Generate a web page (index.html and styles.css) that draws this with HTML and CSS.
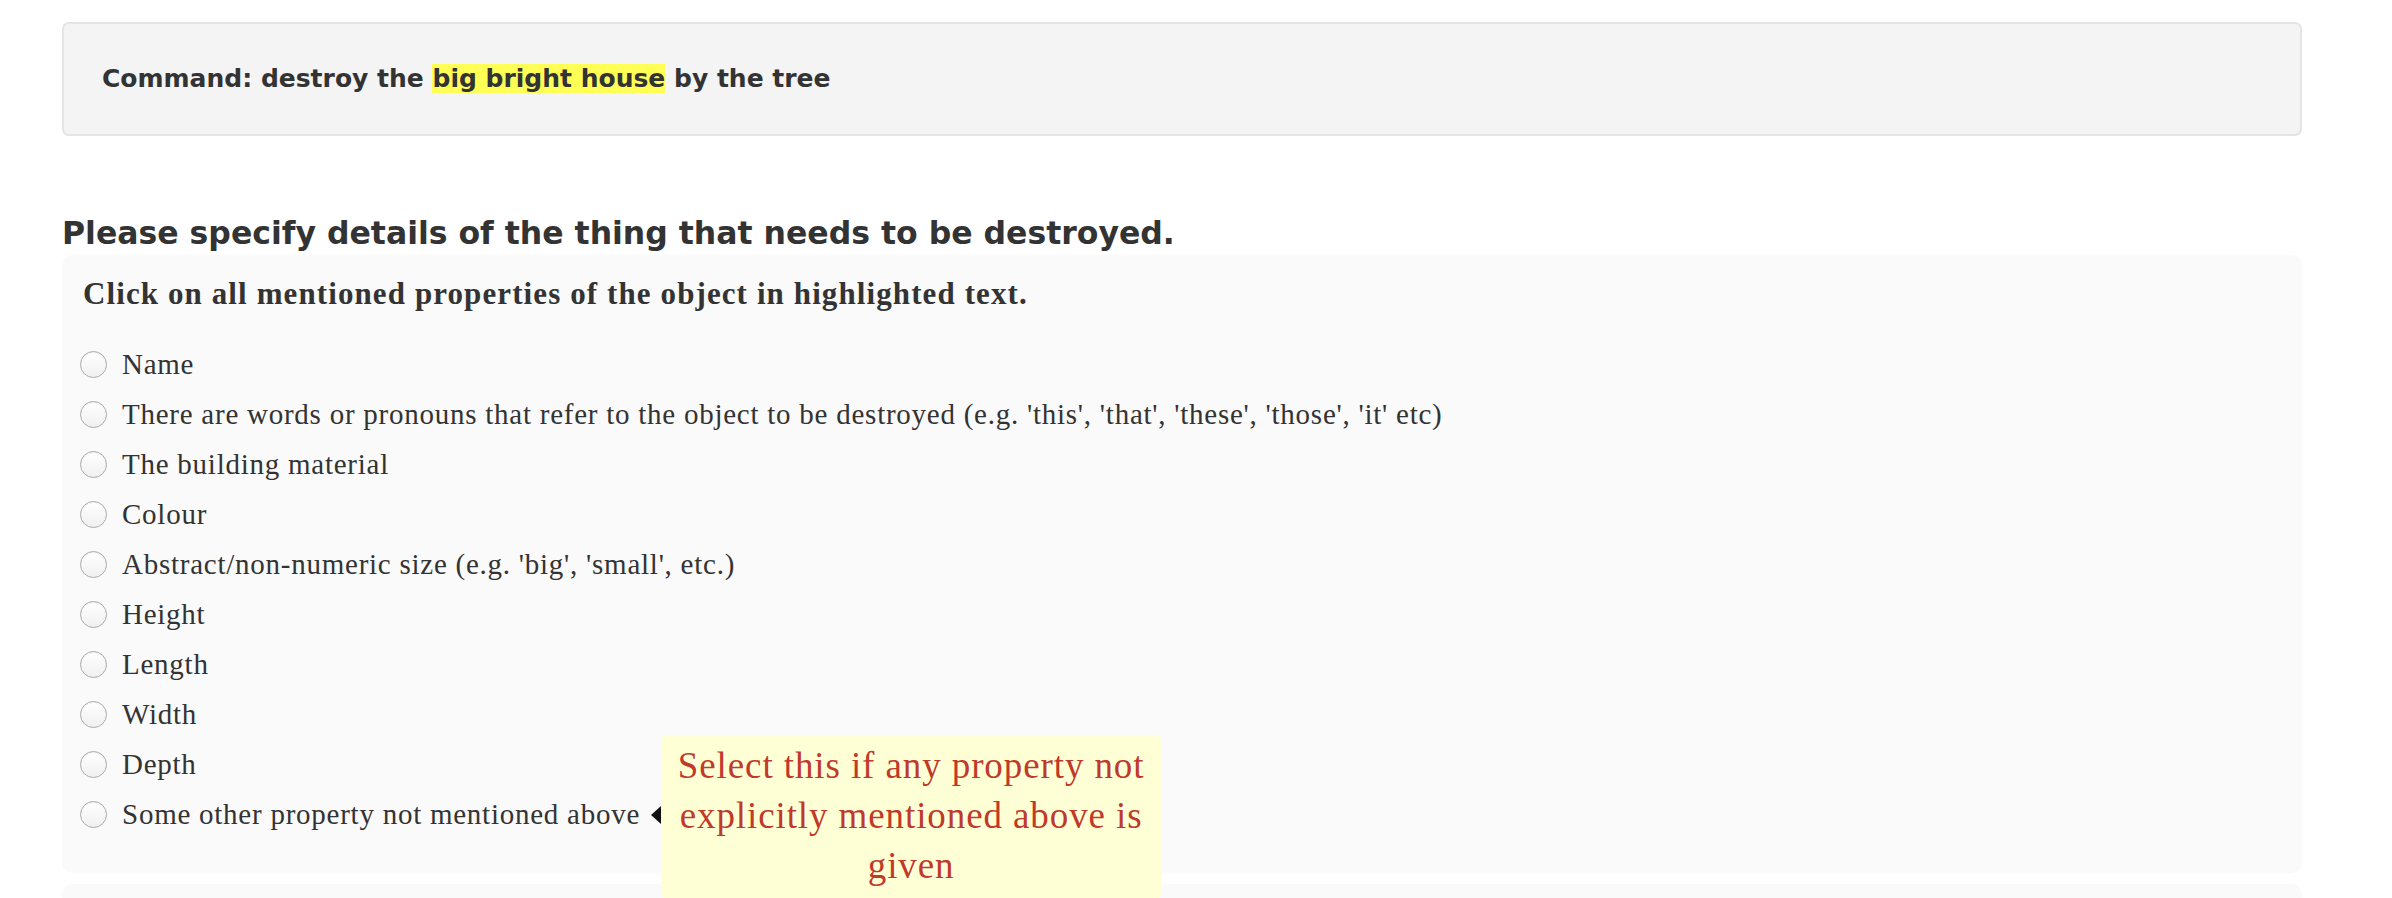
FILE: index.html
```html
<!DOCTYPE html>
<html lang="en">
<head>
<meta charset="utf-8">
<title>Destroy command</title>
<link rel="stylesheet" href="styles.css">
</head>
<body>
<div class="page">
  <div class="command">Command: destroy the <span class="hl">big bright house</span> by the tree</div>

  <h2 class="title">Please specify details of the thing that needs to be destroyed.</h2>

  <div class="panel">
    <div class="question">Click on all mentioned properties of the object in highlighted text.</div>
    <div class="options">
      <label class="opt"><input type="radio" class="radio"><span class="opt-text">Name</span></label>
      <label class="opt"><input type="radio" class="radio"><span class="opt-text">There are words or pronouns that refer to the object to be destroyed (e.g. 'this', 'that', 'these', 'those', 'it' etc)</span></label>
      <label class="opt"><input type="radio" class="radio"><span class="opt-text">The building material</span></label>
      <label class="opt"><input type="radio" class="radio"><span class="opt-text">Colour</span></label>
      <label class="opt"><input type="radio" class="radio"><span class="opt-text">Abstract/non-numeric size (e.g. 'big', 'small', etc.)</span></label>
      <label class="opt"><input type="radio" class="radio"><span class="opt-text">Height</span></label>
      <label class="opt"><input type="radio" class="radio"><span class="opt-text">Length</span></label>
      <label class="opt"><input type="radio" class="radio"><span class="opt-text">Width</span></label>
      <label class="opt"><input type="radio" class="radio"><span class="opt-text">Depth</span></label>
      <label class="opt"><input type="radio" class="radio"><span class="opt-text has-tip">Some other property not mentioned above<span class="tip">Select this if any property not explicitly mentioned above is given</span></span></label>
    </div>
  </div>

  <div class="panel panel-next"></div>
</div>
</body>
</html>
```

FILE: styles.css
```css
html, body {
  margin: 0;
  padding: 0;
  background: #ffffff;
  overflow: hidden;
}

body {
  color: #333333;
}

.page {
  width: 2240px;
  padding: 22px 0 0 62px;
}

.command {
  background: #f4f4f4;
  border: 2px solid #e4e4e4;
  border-radius: 7px;
  padding: 40px 38px;
  font-family: "DejaVu Sans", Verdana, sans-serif;
  font-weight: bold;
  font-size: 25px;
  line-height: 30px;
  color: #333333;
}

.hl {
  background: #ffff55;
}

.title {
  margin: 79px 0 4px 0;
  font-family: "DejaVu Sans", Verdana, sans-serif;
  font-weight: bold;
  font-size: 31.5px;
  line-height: 36px;
  color: #333333;
}

.panel {
  background: #fafafa;
  border-radius: 10px;
  padding: 18.5px 18px 34px 18px;
}

.panel-next {
  margin-top: 11px;
  height: 60px;
  padding: 0;
}

.question {
  margin-left: 3px;
  font-family: "Liberation Serif", Georgia, serif;
  font-weight: bold;
  font-size: 31px;
  line-height: 40px;
  letter-spacing: 1.1px;
  color: #333333;
}

.options {
  margin-top: 25.7px;
  display: flex;
  flex-direction: column;
}

.opt {
  display: flex;
  align-items: center;
  height: 50px;
  font-family: "Liberation Serif", Georgia, serif;
  font-size: 29px;
  line-height: 50px;
  letter-spacing: 0.75px;
  color: #333333;
}

.radio {
  appearance: none;
  -webkit-appearance: none;
  box-sizing: border-box;
  width: 27px;
  height: 27px;
  margin: 0 15px 0 0;
  border: 1px solid #aaaaaa;
  border-radius: 50%;
  background: linear-gradient(#ffffff, #f0f0f0);
  box-shadow: inset 0 1px 1px rgba(0, 0, 0, 0.06);
  flex: none;
}

.opt-text {
  white-space: nowrap;
}

.has-tip {
  position: relative;
}

.tip {
  position: absolute;
  left: calc(100% + 21px);
  top: -54px;
  width: 500px;
  box-sizing: border-box;
  padding: 5.5px 14px 8.5px;
  background: #ffffd5;
  border-radius: 6px;
  color: #c0392b;
  font-family: "Liberation Serif", Georgia, serif;
  font-size: 37px;
  line-height: 50px;
  letter-spacing: 0.9px;
  text-align: center;
  white-space: normal;
}

.tip::before {
  content: "";
  position: absolute;
  right: 100%;
  top: 71px;
  border-top: 9px solid transparent;
  border-bottom: 9px solid transparent;
  border-right: 10px solid #111111;
}
```
